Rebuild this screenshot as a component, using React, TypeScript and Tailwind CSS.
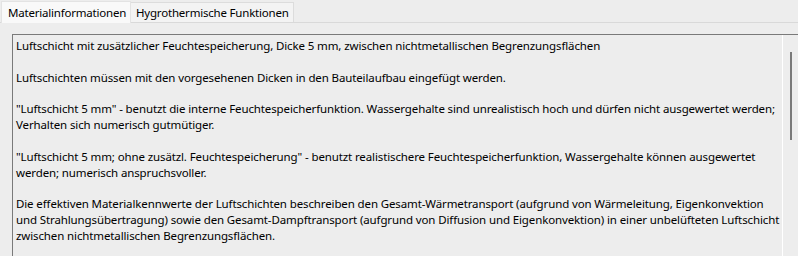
const paragraphs: string[][] = [
  ['Luftschicht mit zusätzlicher Feuchtespeicherung, Dicke 5 mm, zwischen nichtmetallischen Begrenzungsflächen'],
  ['Luftschichten müssen mit den vorgesehenen Dicken in den Bauteilaufbau eingefügt werden.'],
  [
    '"Luftschicht 5 mm" - benutzt die interne Feuchtespeicherfunktion. Wassergehalte sind unrealistisch hoch und dürfen nicht ausgewertet werden;',
    'Verhalten sich numerisch gutmütiger.',
  ],
  [
    '"Luftschicht 5 mm; ohne zusätzl. Feuchtespeicherung" - benutzt realistischere Feuchtespeicherfunktion, Wassergehalte können ausgewertet',
    'werden; numerisch anspruchsvoller.',
  ],
  [
    'Die effektiven Materialkennwerte der Luftschichten beschreiben den Gesamt-Wärmetransport (aufgrund von Wärmeleitung, Eigenkonvektion',
    'und Strahlungsübertragung) sowie den Gesamt-Dampftransport (aufgrund von Diffusion und Eigenkonvektion) in einer unbelüfteten Luftschicht',
    'zwischen nichtmetallischen Begrenzungsflächen.',
  ],
];

export default function App() {
  return (
    <div className="w-[798px] h-[256px] overflow-hidden bg-[#ededed] text-[11.5px] tracking-[-0.2px] text-black font-['Noto_Sans',sans-serif] whitespace-nowrap">
      {/* tab strip */}
      <div className="flex h-[23px] items-end border-b border-[#d9d9d9] pl-[1px]">
        <div className="relative z-10 -mb-px flex h-[22px] w-[130px] items-center border border-b-0 border-[#e3e3e3] bg-[#f9f9f9] pl-[6px]">
          Materialinformationen
        </div>
        <div className="flex h-[20px] w-[163px] items-center border border-b-0 border-l-0 border-[#dcdcdc] bg-[#f3f3f3] pl-[5px]">
          Hygrothermische Funktionen
        </div>
      </div>

      {/* panel */}
      <div className="pl-[12px] pt-[11px]">
        <div className="flex h-[230px] border-l border-t border-[#7a7a7a]">
          <div className="flex-1 overflow-hidden border-r border-white pl-[3px] pt-[3px] leading-[15.85px] tracking-[-0.12px]">
            {paragraphs.map((lines, i) => (
              <p key={i} className={i > 0 ? 'mt-[15.85px]' : ''}>
                {lines.map((l, j) => (
                  <span key={j} className="block">
                    {l}
                  </span>
                ))}
              </p>
            ))}
          </div>
          <div className="w-[15px] shrink-0 pl-[7px] pt-[17px]">
            <div className="h-[88px] w-[2px] bg-[#7a7a7a]" />
          </div>
        </div>
      </div>
    </div>
  );
}
